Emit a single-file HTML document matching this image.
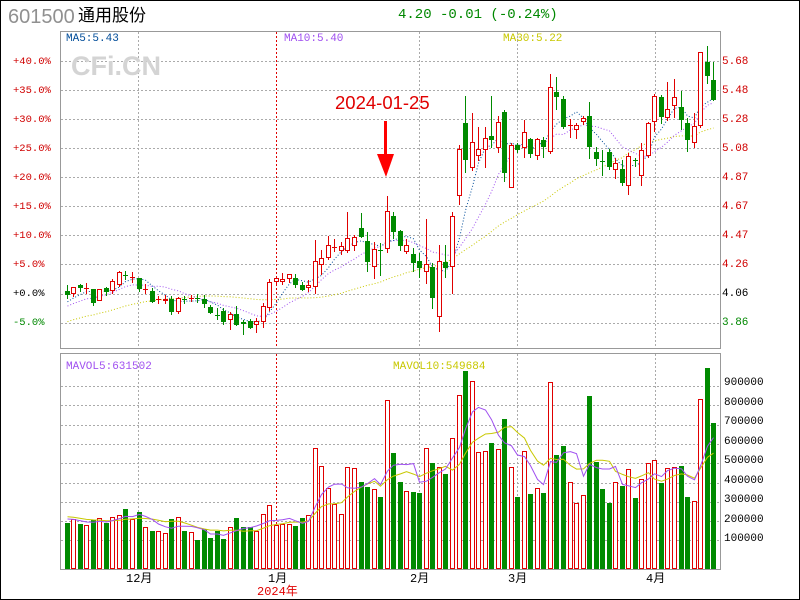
<!DOCTYPE html>
<html><head><meta charset="utf-8"><style>
html,body{margin:0;padding:0;background:#fff}
#w{position:relative;width:798px;height:598px;border:1px solid #000;overflow:hidden;background:#fff;font-family:"Liberation Mono","Noto Sans CJK SC",monospace}
.t{position:absolute;white-space:nowrap;line-height:1}
</style></head><body><div id="w">
<svg id="s" width="800" height="600" style="position:absolute;left:-1px;top:-1px" xmlns="http://www.w3.org/2000/svg"></svg>
<div class="t" style="left:7px;top:6px;font-family:'Liberation Sans',sans-serif;font-size:20px;color:#909090">601500</div>
<div class="t" style="left:77px;top:6px;font-family:'Liberation Sans','Noto Sans CJK SC',sans-serif;font-size:17px;color:#000">通用股份</div>
<div class="t" style="left:397px;top:7px;font-size:14px;color:#008800">4.20 -0.01 (-0.24%)</div>
<div class="t" style="left:65px;top:33px;font-size:11px;color:#004c99">MA5:5.43</div>
<div class="t" style="left:283px;top:33px;font-size:11px;color:#a050f0">MA10:5.40</div>
<div class="t" style="left:502px;top:33px;font-size:11px;color:#c8c800">MA30:5.22</div>
<div class="t" style="left:70px;top:52px;font-family:'Liberation Sans',sans-serif;font-weight:bold;font-size:27px;color:#d4d4d4">CFi.CN</div>
<div class="t" style="left:334px;top:93px;font-family:'Liberation Sans',sans-serif;font-size:18.5px;color:#e00000">2024-01-25</div>
<div class="t" style="left:65px;top:361px;font-size:11px;color:#a050f0">MAVOL5:631502</div>
<div class="t" style="left:392px;top:361px;font-size:11px;color:#c8c800">MAVOL10:549684</div>
<div class="t" style="left:125px;top:572px;font-size:12px;color:#000;font-family:'Liberation Mono','Noto Sans CJK SC',monospace">12月</div>
<div class="t" style="left:267px;top:572px;font-size:12px;color:#000;font-family:'Liberation Mono','Noto Sans CJK SC',monospace">1月</div>
<div class="t" style="left:409px;top:572px;font-size:12px;color:#000;font-family:'Liberation Mono','Noto Sans CJK SC',monospace">2月</div>
<div class="t" style="left:507px;top:572px;font-size:12px;color:#000;font-family:'Liberation Mono','Noto Sans CJK SC',monospace">3月</div>
<div class="t" style="left:645px;top:572px;font-size:12px;color:#000;font-family:'Liberation Mono','Noto Sans CJK SC',monospace">4月</div>
<div class="t" style="left:256px;top:585px;font-size:12px;color:#e00000;font-family:'Liberation Mono','Noto Sans CJK SC',monospace">2024年</div>
<div class="t" style="left:12px;top:56px;font-size:10.5px;color:#d00000">+40.0%</div>
<div class="t" style="left:12px;top:85px;font-size:10.5px;color:#d00000">+35.0%</div>
<div class="t" style="left:12px;top:114px;font-size:10.5px;color:#d00000">+30.0%</div>
<div class="t" style="left:12px;top:143px;font-size:10.5px;color:#d00000">+25.0%</div>
<div class="t" style="left:12px;top:172px;font-size:10.5px;color:#d00000">+20.0%</div>
<div class="t" style="left:12px;top:201px;font-size:10.5px;color:#d00000">+15.0%</div>
<div class="t" style="left:12px;top:230px;font-size:10.5px;color:#d00000">+10.0%</div>
<div class="t" style="left:12px;top:259px;font-size:10.5px;color:#d00000">+5.0%</div>
<div class="t" style="left:12px;top:288px;font-size:10.5px;color:#000">+0.0%</div>
<div class="t" style="left:12px;top:317px;font-size:10.5px;color:#008800">-5.0%</div>
<div class="t" style="left:721px;top:56px;font-size:11px;color:#d00000">5.68</div>
<div class="t" style="left:721px;top:85px;font-size:11px;color:#d00000">5.48</div>
<div class="t" style="left:721px;top:114px;font-size:11px;color:#d00000">5.28</div>
<div class="t" style="left:721px;top:143px;font-size:11px;color:#d00000">5.08</div>
<div class="t" style="left:721px;top:172px;font-size:11px;color:#d00000">4.87</div>
<div class="t" style="left:721px;top:201px;font-size:11px;color:#d00000">4.67</div>
<div class="t" style="left:721px;top:230px;font-size:11px;color:#d00000">4.47</div>
<div class="t" style="left:721px;top:259px;font-size:11px;color:#d00000">4.26</div>
<div class="t" style="left:721px;top:288px;font-size:11px;color:#000">4.06</div>
<div class="t" style="left:721px;top:317px;font-size:11px;color:#008800">3.86</div>
<div class="t" style="left:723px;top:377px;font-size:11px;color:#000">900000</div>
<div class="t" style="left:723px;top:397px;font-size:11px;color:#000">800000</div>
<div class="t" style="left:723px;top:416px;font-size:11px;color:#000">700000</div>
<div class="t" style="left:723px;top:436px;font-size:11px;color:#000">600000</div>
<div class="t" style="left:723px;top:455px;font-size:11px;color:#000">500000</div>
<div class="t" style="left:723px;top:475px;font-size:11px;color:#000">400000</div>
<div class="t" style="left:723px;top:494px;font-size:11px;color:#000">300000</div>
<div class="t" style="left:723px;top:514px;font-size:11px;color:#000">200000</div>
<div class="t" style="left:723px;top:533px;font-size:11px;color:#000">100000</div>
</div>
<script>
var D="g 291 294 285 298|r 287 293 287 296|g 285 287 284 291|r 288 288 283 293|g 289 302 289 305|r 289 300 289 300|g 288 291 287 295|r 281 290 279 293|r 272 284 271 286|g 275 275 271 279|r 277 277 272 282|g 278 288 278 291|r 289 289 284 293|g 291 301 288 302|r 299 299 296 303|r 299 300 295 303|g 299 311 296 314|r 298 311 297 313|g 299 299 296 303|r 298 298 295 301|g 298 298 294 302|g 299 303 295 307|g 307 312 305 313|g 315 315 308 319|g 311 321 308 324|r 314 319 312 329|g 314 324 306 325|g 322 323 320 334|g 321 327 319 328|r 321 324 318 332|r 306 321 303 327|r 282 307 279 310|r 278 281 277 283|r 279 281 273 284|r 274 278 274 282|g 278 284 274 287|g 285 289 282 290|r 285 287 280 291|r 261 286 240 293|r 258 264 250 274|r 245 257 236 259|r 247 247 239 251|r 246 250 242 254|r 238 250 212 252|r 237 245 235 250|g 228 236 213 237|g 241 261 232 271|r 249 266 242 278|g 250 250 243 275|r 211 248 196 252|g 216 231 212 238|g 231 245 230 250|r 245 251 239 253|g 254 262 248 271|g 261 267 253 277|r 264 271 219 283|g 267 297 263 308|r 261 316 245 331|g 262 267 245 277|r 216 266 212 293|r 149 195 145 204|g 123 159 96 172|r 142 167 113 170|r 149 155 127 160|r 138 149 127 167|g 136 139 96 147|r 122 147 116 152|g 112 172 110 181|r 145 187 143 187|g 145 149 143 152|r 132 147 120 157|g 139 153 138 157|r 139 155 138 159|g 140 146 137 157|r 87 151 74 153|g 92 96 77 109|g 99 126 96 128|r 125 125 119 137|r 125 129 123 138|r 118 121 116 124|g 116 146 102 158|g 152 158 147 165|g 161 161 150 175|g 152 166 149 169|r 163 169 158 178|g 169 182 160 185|r 156 185 153 194|g 160 160 158 166|r 150 175 143 185|r 123 155 122 157|r 96 121 94 131|g 97 116 95 123|r 109 117 82 120|r 97 105 79 117|g 107 119 91 129|g 123 139 118 151|r 126 142 113 147|r 52 125 52 127|g 62 75 46 83|g 80 99 62 100".split("|").map(function(s){var a=s.split(" ");return [a[0],+a[1],+a[2],+a[3],+a[4]];});
var V=[523,519,524,525,520,518,523,517,515,509,519,512,527,531,531,533,519,517,531,532,540,529,538,531,539,527,518,527,527,531,514,505,525,524,524,526,518,515,448,466,488,504,514,467,468,482,487,489,497,400,453,482,491,492,493,448,463,467,474,438,395,371,381,452,451,443,449,419,467,497,451,494,488,493,382,455,446,482,503,495,396,462,489,503,482,486,469,498,479,463,460,483,468,467,466,497,501,399,368,423];
var R="#e00000",G="#008a00",h=[];
function L(x1,y1,x2,y2,c,e){h.push('<line x1="'+x1+'" y1="'+y1+'" x2="'+x2+'" y2="'+y2+'" stroke="'+c+'" '+(e||'')+'/>');}
h.push('<rect x="60.5" y="31.5" width="660" height="317" fill="none" stroke="#999" stroke-width="1"/>');
h.push('<rect x="60.5" y="353.5" width="660" height="216" fill="none" stroke="#999" stroke-width="1"/>');
var dg='stroke-dasharray="2 2"';
[61.5,90.5,119.5,148.5,177.5,206.5,235.5,264.5,294.5,323.5].forEach(function(y){L(61,y,720,y,"#aaa",dg);});
for(var k=0;k<9;k++){var y=Math.round(386+19.3*k)+.5;L(61,y,720,y,"#aaa",dg);}
[138.5,419.5,517.5,655.5].forEach(function(x){L(x,32,x,348,"#aaa",dg);L(x,354,x,569,"#aaa",dg);});
L(276.5,32,276.5,348,"#e00000",'stroke-dasharray="2 2"');L(276.5,354,276.5,569,"#e00000",'stroke-dasharray="2 2"');
h.push('<rect x="384" y="121" width="3" height="36" fill="#f00"/><polygon points="377,154 394,154 386,177" fill="#f00"/>');
function X(i){return Math.round(66.7+6.53*i);}
var C=D.map(function(d){return d[0]=="r"?d[1]:d[2];});
var pc=[];for(var k=30;k>=1;k--)pc.push(300+k*1.5);
var all=pc.concat(C);
function ma(arr,n,off){var o=[];for(var i=0;i<100;i++){var s=0;for(var j=0;j<n;j++)s+=arr[off+i-j];o.push(s/n);}return o;}
function poly(a,c,e){h.push('<polyline fill="none" stroke="'+c+'" '+e+' points="'+a.map(function(v,i){return (X(i)+.5)+","+v.toFixed(1);}).join(" ")+'"/>');}
var dot='stroke-width="1" stroke-dasharray="1 2"';
poly(ma(all,30,30),"#c8c800",dot);poly(ma(all,10,30),"#a050f0",dot);poly(ma(all,5,30),"#004c99",dot);
D.forEach(function(d,i){var x=X(i),c=d[0]=="r"?R:G,t=d[1],b=d[2];
 L(x+.5,d[3],x+.5,t,c);L(x+.5,b,x+.5,d[4]+1,c);
 if(b-t<1){L(x-2,t+.5,x+3,t+.5,c);}
 else if(d[0]=="r")h.push('<rect x="'+(x-1.5)+'" y="'+(t+.5)+'" width="4" height="'+(b-t)+'" fill="#fff" stroke="'+R+'"/>');
 else h.push('<rect x="'+(x-2)+'" y="'+t+'" width="5" height="'+(b-t+1)+'" fill="'+G+'"/>');});
V.forEach(function(v,i){var x=X(i);if(D[i][0]=="r")h.push('<rect x="'+(x-1.5)+'" y="'+(v+.5)+'" width="4" height="'+(569-v-1)+'" fill="#fff" stroke="'+R+'"/>');
 else h.push('<rect x="'+(x-2)+'" y="'+v+'" width="5" height="'+(569-v)+'" fill="'+G+'"/>');});
var pv=[];for(var k=0;k<10;k++)pv.push(512+k*0.8);
var av=pv.concat(V);
poly(ma(av,10,10),"#c8c800",'stroke-width="1"');poly(ma(av,5,10),"#a050f0",'stroke-width="1"');
document.getElementById("s").innerHTML=h.join("");
</script>
</body></html>
